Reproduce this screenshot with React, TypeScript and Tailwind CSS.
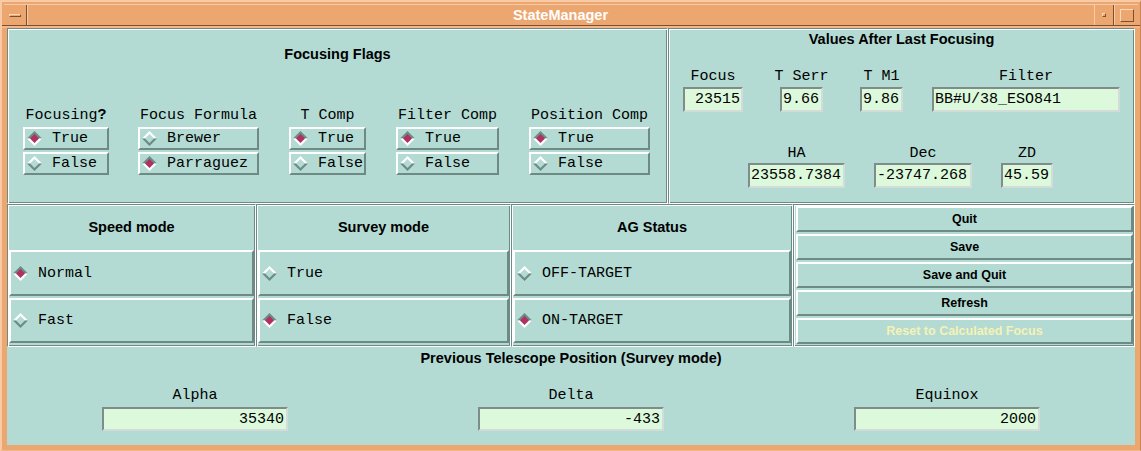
import React from "react";

const TEAL = "#b3dbd3";

function Diamond({ on }: { on: boolean }) {
  const top = on ? "#6e8a84" : "#ffffff";
  const bot = on ? "#ffffff" : "#6e8a84";
  const fill = on ? "#b03060" : TEAL;
  return (
    <svg width="15" height="15" viewBox="0 0 15 15" className="shrink-0">
      <polygon points="0,7.5 7.5,0 15,7.5" fill={top} />
      <polygon points="0,7.5 7.5,15 15,7.5" fill={bot} />
      <polygon points="3,7.5 7.5,3 12,7.5 7.5,12" fill={fill} />
    </svg>
  );
}

function Radio({ label, on, className = "" }: { label: string; on: boolean; className?: string }) {
  return (
    <div
      className={`flex items-center border-2 border-t-white border-l-white border-b-[#6e8a84] border-r-[#6e8a84] pl-[2px] ${className}`}
    >
      <Diamond on={on} />
      <span className="ml-[10px] whitespace-pre font-['Liberation_Mono',monospace] text-[15px] leading-none text-black">
        {label}
      </span>
    </div>
  );
}

function Field({ value, className = "", right = false }: { value: string; className?: string; right?: boolean }) {
  return (
    <div
      className={`flex items-center border-2 border-t-[#7f8c89] border-l-[#7f8c89] border-b-[#d3dcd9] border-r-[#d3dcd9] bg-[#dcf9dc] px-[1px] font-['Liberation_Mono',monospace] text-[15px] leading-none text-black ${
        right ? "justify-end" : "justify-start"
      } ${className}`}
    >
      {value}
    </div>
  );
}

const etched =
  "border border-t-[#6e8a84] border-l-[#6e8a84] border-b-white border-r-white shadow-[inset_1px_1px_0_#ffffff,inset_-1px_-1px_0_#6e8a84]";

function Label({ children }: { children: React.ReactNode }) {
  return (
    <div className="whitespace-pre text-center font-['Liberation_Mono',monospace] text-[15px] leading-[18px] text-black">
      {children}
    </div>
  );
}

function FlagCol({
  label,
  w,
  a,
  b,
  sel,
  className = "",
}: {
  label: React.ReactNode;
  w: string;
  a: string;
  b: string;
  sel: 0 | 1;
  className?: string;
}) {
  return (
    <div className={`flex flex-col items-center ${className}`}>
      <Label>{label}</Label>
      <div className={`mt-[2px] flex flex-col gap-[2px] ${w}`}>
        <Radio label={a} on={sel === 0} className="h-[23px]" />
        <Radio label={b} on={sel === 1} className="h-[23px]" />
      </div>
    </div>
  );
}

function ValCol({
  label,
  value,
  fw,
  right = false,
  gap = "mt-[1px]",
  className = "",
}: {
  label: string;
  value: string;
  fw: string;
  right?: boolean;
  gap?: string;
  className?: string;
}) {
  return (
    <div className={`flex flex-col items-center ${className}`}>
      <Label>{label}</Label>
      <Field value={value} right={right} className={`${gap} h-[25px] ${fw}`} />
    </div>
  );
}

function ModePanel({
  title,
  a,
  b,
  sel,
  className = "",
}: {
  title: string;
  a: string;
  b: string;
  sel: 0 | 1;
  className?: string;
}) {
  return (
    <div className={`flex flex-col ${etched} ${className}`}>
      <div className="mt-[13px] text-center font-['Liberation_Sans',Arial,sans-serif] text-[14.5px] font-bold leading-[18px] text-black">
        {title}
      </div>
      <div className="mt-[14px] flex flex-col gap-[2px] px-[1px]">
        <Radio label={a} on={sel === 0} className="h-[46px]" />
        <Radio label={b} on={sel === 1} className="h-[45px]" />
      </div>
    </div>
  );
}

function Btn({ label, dim = false }: { label: string; dim?: boolean }) {
  return (
    <div
      className={`flex h-[26px] items-center justify-center border-2 border-t-white border-l-white border-b-[#6e8a84] border-r-[#6e8a84] font-['Liberation_Sans',Arial,sans-serif] text-[12.5px] font-bold leading-none ${
        dim ? "text-[#f6f2b6]" : "text-black"
      }`}
    >
      {label}
    </div>
  );
}

export default function App() {
  return (
    <div className="flex h-[451px] w-[1141px] flex-col overflow-hidden border-t-2 border-l-2 border-r border-b border-t-[#f8cba6] border-l-[#f8cba6] border-r-[#c88552] border-b-[#f2b88a] bg-[#eca66f]">
      {/* title bar */}
      <div className="flex h-[26px] flex-col">
        <div className="mx-[2px] mt-[2px] flex h-[21px] border-t border-t-[#f8cba6]">
          <div className="flex w-[23px] items-center justify-center border-r border-r-[#7b5032] shadow-[1px_0_0_#f8cba6]">
            <div className="h-[3px] w-[12px] border border-t-[#fbd8b8] border-l-[#fbd8b8] border-b-[#7b5032] border-r-[#7b5032]" />
          </div>
          <div className="flex flex-1 items-center justify-center font-['Liberation_Sans',Arial,sans-serif] text-[14.5px] font-bold leading-none text-white">
            StateManager
          </div>
          <div className="flex w-[20px] items-center justify-center border-l border-l-[#f8cba6] border-r border-r-[#7b5032]">
            <div className="h-[4px] w-[4px] border border-t-[#fbd8b8] border-l-[#fbd8b8] border-b-[#7b5032] border-r-[#7b5032]" />
          </div>
          <div className="flex w-[24px] items-center justify-center border-l border-l-[#f8cba6]">
            <div className="h-[13px] w-[14px] border border-t-[#fbd8b8] border-l-[#fbd8b8] border-b-[#7b5032] border-r-[#7b5032]" />
          </div>
        </div>
        <div className="h-px bg-[#7b5032]" />
        <div className="h-[2px] bg-[#f2b88a]" />
      </div>

      {/* content */}
      <div className="mx-[5px] flex h-[417px] w-[1128px] flex-col bg-[#b3dbd3]">
        {/* row 1 */}
        <div className="flex h-[176px]">
          <div className={`flex w-[661px] flex-col ${etched}`}>
            <div className="mt-[16px] text-center font-['Liberation_Sans',Arial,sans-serif] text-[14.5px] font-bold leading-[18px] text-black">
              Focusing Flags
            </div>
            <div className="mt-[44px] flex items-start pl-[15px]">
              <FlagCol
                label={
                  <>
                    Focusing<span className="font-bold">?</span>
                  </>
                }
                w="w-[86px]"
                a="True"
                b="False"
                sel={0}
              />
              <FlagCol label="Focus Formula" w="w-[121px]" a="Brewer" b="Parraguez" sel={1} className="ml-[29px]" />
              <FlagCol label="T Comp" w="w-[77px]" a="True" b="False" sel={0} className="ml-[30px]" />
              <FlagCol label="Filter Comp" w="w-[103px]" a="True" b="False" sel={0} className="ml-[30px]" />
              <FlagCol label="Position Comp" w="w-[121px]" a="True" b="False" sel={0} className="ml-[30px]" />
            </div>
          </div>
          <div className={`flex flex-1 flex-col ${etched}`}>
            <div className="mt-[2px] text-center font-['Liberation_Sans',Arial,sans-serif] text-[14.5px] font-bold leading-[16px] text-black">
              Values After Last Focusing
            </div>
            <div className="mt-[21px] flex items-start pl-[14px]">
              <ValCol label="Focus" value="23515" fw="w-[60px]" right className="w-[60px]" />
              <ValCol label="T Serr" value="9.66" fw="w-[43px]" className="ml-[32px] w-[53px]" />
              <ValCol label="T M1" value="9.86" fw="w-[43px]" className="ml-[32px] w-[43px]" />
              <ValCol label="Filter" value="BB#U/38_ESO841" fw="w-[188px]" className="ml-[29px] w-[188px]" />
            </div>
            <div className="mt-[33px] flex items-start pl-[79px]">
              <ValCol label="HA" value="23558.7384" fw="w-[97px]" gap="mt-0" className="w-[97px]" />
              <ValCol label="Dec" value="-23747.268" fw="w-[98px]" gap="mt-0" className="ml-[29px] w-[98px]" />
              <ValCol label="ZD" value="45.59" fw="w-[52px]" gap="mt-0" className="ml-[29px] w-[52px]" />
            </div>
          </div>
        </div>

        {/* row 2 */}
        <div className="flex h-[143px]">
          <ModePanel title="Speed mode" a="Normal" b="Fast" sel={0} className="w-[249px]" />
          <ModePanel title="Survey mode" a="True" b="False" sel={1} className="w-[255px]" />
          <ModePanel title="AG Status" a="OFF-TARGET" b="ON-TARGET" sel={1} className="w-[282px]" />
          <div className={`flex flex-1 flex-col gap-[2px] pt-[1px] pl-[2px] pr-[1px] ${etched}`}>
            <Btn label="Quit" />
            <Btn label="Save" />
            <Btn label="Save and Quit" />
            <Btn label="Refresh" />
            <Btn label="Reset to Calculated Focus" dim />
          </div>
        </div>

        {/* bottom */}
        <div className="flex flex-1 flex-col">
          <div className="mt-[2px] text-center font-['Liberation_Sans',Arial,sans-serif] text-[14.5px] font-bold leading-[18px] text-black">
            Previous Telescope Position (Survey mode)
          </div>
          <div className="mt-[20px] grid grid-cols-3">
            {[
              ["Alpha", "35340"],
              ["Delta", "-433"],
              ["Equinox", "2000"],
            ].map(([l, v]) => (
              <div key={l} className="flex flex-col items-center">
                <Label>{l}</Label>
                <Field value={v} right className="mt-[2px] h-[24px] w-[186px] pr-[2px]" />
              </div>
            ))}
          </div>
        </div>
      </div>
    </div>
  );
}
